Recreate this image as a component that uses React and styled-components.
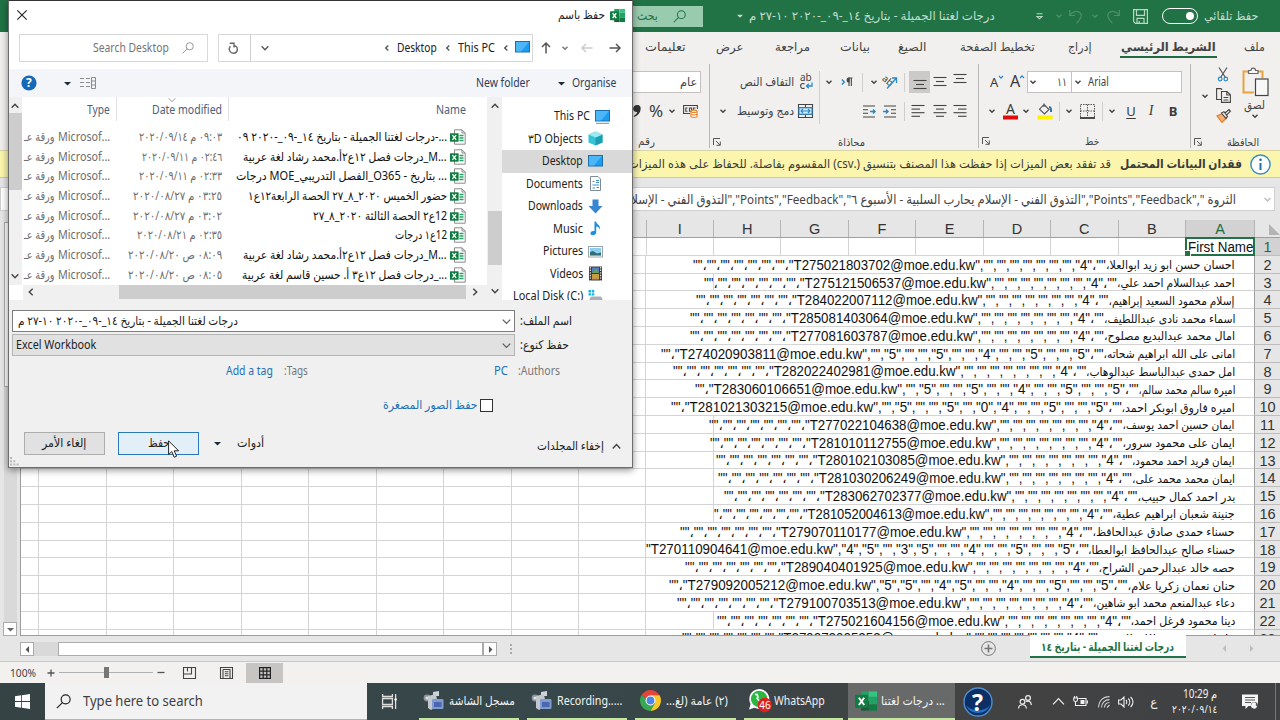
import React from 'react';
import styled, { createGlobalStyle, css } from 'styled-components';

const GlobalStyle = createGlobalStyle`
  * {
    box-sizing: border-box;
  }
  body {
    margin: 0;
    overflow: hidden;
    background: #e6e6e6;
  }
`;

const UI_FONT = '"Noto Sans", "Open Sans", "DejaVu Sans", sans-serif';
const CELL_FONT = '"Liberation Sans", "DejaVu Sans", sans-serif';

/* ---------- shared parts ---------- */

const TextBox = styled.span`
  display: block;
  flex: none;
  white-space: pre;
  margin-inline-start: ${p => p.$g || 0}px;
  font-size: ${p => p.$size || 12}px;
  font-weight: ${p => (p.$bold ? 700 : 400)};
  color: ${p => p.$color || 'inherit'};
  font-family: ${p => p.$font || 'inherit'};
  line-height: ${p => p.$lh || 16}px;
`;

const Isolate = styled.bdi`
  display: block;
`;

const TextRun = styled.span`
  display: inline-block;
  white-space: pre;
  transform-origin: ${p => (p.$origin === 'ltr' ? 'left' : 'right')} center;
  ${p =>
    p.$override &&
    css`
      direction: ltr;
      unicode-bidi: bidi-override;
    `}
`;

// Squeezes or stretches a run of text so it fills exactly w pixels.
const Fit = ({ w, g, size, color, bold, font, lh, dir = 'rtl', override, children }) => {
  const ref = React.useRef(null);
  const [scale, setScale] = React.useState(1);

  React.useLayoutEffect(() => {
    const natural = ref.current.offsetWidth;
    if (natural > 0) setScale(w / natural);
  }, [w, children]);

  return (
    <TextBox
      $g={g}
      $size={size}
      $color={color}
      $bold={bold}
      $font={font}
      $lh={lh}
      style={{ width: w }}
    >
      <Isolate dir={dir}>
        <TextRun ref={ref} $origin={dir} $override={override} style={{ transform: `scaleX(${scale})` }}>
          {children}
        </TextRun>
      </Isolate>
    </TextBox>
  );
};

const Slot = styled.div`
  flex: none;
  display: flex;
  align-items: center;
  justify-content: center;
  width: ${p => p.$w}px;
  height: ${p => (p.$h ? `${p.$h}px` : 'auto')};
  margin-inline-start: ${p => p.$g || 0}px;
  margin-top: ${p => p.$t || 0}px;
  background: ${p => p.$bg || 'transparent'};
`;

const Svg = styled.svg`
  display: block;
  flex: none;
  overflow: visible;
  fill: none;
  stroke: ${p => p.$c || '#444'};
  stroke-width: ${p => p.$sw || 1};
`;

const TURN = { down: 0, up: 180, left: 90, right: -90 };

const Chevron = ({ g, w = 6, color = '#444', sw = 1.4, turn = 'down', t }) => (
  <Slot $g={g} $w={w} $t={t}>
    <Svg width={w} height={w} viewBox="0 0 6 6" $c={color} $sw={sw * (6 / w)}>
      <path d="M0.5 1.7L3 4.3L5.5 1.7" transform={`rotate(${TURN[turn]} 3 3)`} />
    </Svg>
  </Slot>
);

const Caret = ({ g, w = 7, color = '#1c2b3a', turn = 'down' }) => (
  <Slot $g={g} $w={w}>
    <Svg width={w} height={w} viewBox="0 0 8 8" $c="none">
      <path d="M0 2.2H8L4 6.2Z" fill={color} transform={`rotate(${TURN[turn]} 4 4)`} />
    </Svg>
  </Slot>
);

const Magnifier = ({ w, color, sw = 1 }) => (
  <Svg width={w} height={w} viewBox="0 0 14 14" $c={color} $sw={sw}>
    <circle cx="9" cy="5" r="4.2" />
    <path d="M6 8L0.8 13.2" />
  </Svg>
);

const ExcelLogo = ({ w = 16 }) => (
  <Svg width={w} height={w} viewBox="0 0 16 16" $c="none">
    <path d="M4.5 1H10V8H4.5Z" fill="#21a366" />
    <path d="M10 1H16V5H10Z" fill="#33c481" />
    <path d="M10 5H16V10.5H10Z" fill="#21a366" />
    <path d="M4.5 8H10V15H4.5Z" fill="#185c37" />
    <path d="M10 10.5H16V15H10Z" fill="#107c41" />
    <rect x="0" y="3.5" width="9.5" height="9.5" rx="0.8" fill="#107c41" />
    <path d="M2.8 5.6L6.7 10.9M6.7 5.6L2.8 10.9" stroke="#fff" strokeWidth="1.4" />
  </Svg>
);

/* ---------- frame ---------- */

const Screen = styled.div`
  position: relative;
  display: flex;
  flex-direction: column;
  width: 1280px;
  height: 720px;
  overflow: hidden;
  font-family: ${UI_FONT};
  color: #444;
  background: #e6e6e6;
`;

const TitleBar = styled.div`
  display: flex;
  align-items: center;
  flex: none;
  height: 32px;
  background: #217346;
  color: #c4dccf;
`;

const Toggle = styled.div`
  flex: none;
  width: 36px;
  height: 16px;
  margin-inline-start: 6px;
  padding: 2.5px 3px;
  border: 1.4px solid #fff;
  border-radius: 8px;
  &::after {
    content: '';
    display: block;
    width: 8px;
    height: 8px;
    border-radius: 50%;
    background: #fff;
  }
`;

const SearchBox = styled.div`
  display: flex;
  align-items: center;
  flex: none;
  width: 90px;
  height: 21px;
  margin-inline-start: 34px;
  padding-inline-start: 17px;
  background: #99cbae;
  color: #217346;
`;

const Tabs = styled.div`
  display: flex;
  flex: none;
  height: 30px;
  padding-top: 7px;
  background: #f1f0ee;
`;

const ActiveTab = styled.div`
  flex: none;
  height: 19px;
  padding: 0 1px;
  margin-inline-start: 27px;
  border-bottom: 2px solid #1e6b41;
`;

const Ribbon = styled.div`
  display: flex;
  flex: none;
  height: 88px;
  background: #f1f0ee;
`;

const Group = styled.div`
  flex: none;
  width: ${p => p.$w}px;
  height: 84px;
  margin-top: 2px;
  padding-top: 7px;
  border-inline-end: 1px solid #b9b8b6;
`;

const GroupBody = styled.div`
  display: flex;
  height: 52px;
`;

const ToolColumn = styled.div`
  flex: none;
  width: ${p => p.$w}px;
`;

const ToolRow = styled.div`
  display: flex;
  align-items: center;
  height: 22px;
  margin-bottom: 7px;
`;

const GroupLabel = styled.div`
  display: flex;
  align-items: center;
  justify-content: space-between;
  height: 14px;
  margin-top: 12px;
  padding: 0 3px;
`;

const Divider = styled.div`
  flex: none;
  width: 1px;
  height: ${p => p.$h || 19}px;
  margin-inline-start: ${p => p.$g || 0}px;
  background: ${p => p.$c || '#cfcecc'};
`;

const Field = styled.div`
  display: flex;
  align-items: center;
  flex: none;
  width: ${p => p.$w}px;
  height: 22px;
  margin-inline-start: ${p => p.$g || 0}px;
  border: 1px solid #c3c2c0;
  background: #fff;
`;

const MessageBar = styled.div`
  display: flex;
  align-items: center;
  flex: none;
  height: 28px;
  padding-inline-start: 9px;
  border-top: 1px solid #d8d4a4;
  border-bottom: 1px solid #d0cc9a;
  background: #fbf5ae;
  color: #3c3c3c;
`;

const FormulaBar = styled.div`
  flex: none;
  height: 42px;
  padding: 9px 5px 9px 0;
  background: #e6e6e6;
`;

const FormulaField = styled.div`
  display: flex;
  align-items: center;
  height: 24px;
  border: 1px solid #cfcfcf;
  background: #fff;
`;

const LauncherIcon = () => (
  <Svg width="8" height="8" viewBox="0 0 8 8" $c="#555">
    <path d="M0.5 7V0.5H7M3 3L7 7M7.3 3.5V7.3H3.5" />
  </Svg>
);

const AlignIcon = ({ lines, dy = 0 }) => (
  <Svg width="14" height="14" viewBox="0 0 14 14" $c="#444" $sw={1.1}>
    {lines.map(([x1, x2], i) => (
      <path key={i} d={`M${x1} ${1.5 + dy + i * (lines.length > 3 ? 3.6 : 4)}H${x2}`} />
    ))}
  </Svg>
);

const IndentIcon = ({ flip }) => (
  <Svg width="15" height="13" viewBox="0 0 15 13" $c="#444" $sw={1.1}>
    {flip ? (
      <>
        <path d="M1 1H13M1 4.7H6M1 8.3H6M1 12H13" />
        <path d="M8 6.5H13M11 4.5L13 6.5L11 8.5" stroke="#2b88c8" strokeWidth="1.5" />
      </>
    ) : (
      <>
        <path d="M2 1H14M9 4.7H14M9 8.3H14M2 12H14" />
        <path d="M1 6.5H6M4 4.5L6 6.5L4 8.5" stroke="#2b88c8" strokeWidth="1.5" />
      </>
    )}
  </Svg>
);

const Letter = styled.span`
  font-family: "Noto Sans", sans-serif;
  font-size: ${p => p.$size || 13}px;
  line-height: 16px;
  font-weight: ${p => (p.$bold ? 700 : 400)};
  font-style: ${p => (p.$italic ? 'italic' : 'normal')};
  ${p => p.$italic && 'font-family: "Liberation Serif", serif;'}
  text-decoration: ${p => (p.$under ? 'underline' : 'none')};
  text-underline-offset: 2px;
  color: #3b3b3b;
`;

const DOC_TITLE = 'درجات لغتنا الجميلة - بتاريخ ١٤_-٠٩_-٢٠٢٠ ١٠-٢٧ م';

const ExcelTitle = () => (
  <TitleBar>
    <Fit g={22} w={54}>حفظ تلقائي</Fit>
    <Toggle />
    <Slot $g={14} $w={15}>
      <Svg width="15" height="15" viewBox="0 0 15 15" $c="#b8d8c6" $sw={1.2}>
        <path d="M0.6 0.6H14.4V14.4H2.4L0.6 12.6ZM3.5 0.6V6.4H11.5V0.6M4 14.4V9.4H11V14.4M6.2 12V14.4" />
      </Svg>
    </Slot>
    <Slot $g={13} $w={14}>
      <Svg width="14" height="15" viewBox="0 0 14 15" $c="#4d9069" $sw={1.2}>
        <path d="M13.3 1V6.5H8M13 6C10.5 2 5 1.4 2.6 4.2C0.2 7.2 2 10 6.5 14.2" />
      </Svg>
    </Slot>
    <Chevron g={8} w={6} color="#4d9069" />
    <Slot $g={9} $w={14}>
      <Svg width="14" height="15" viewBox="0 0 14 15" $c="#4d9069" $sw={1.2}>
        <path d="M0.7 1V6.5H6M1 6C3.5 2 9 1.4 11.4 4.2C13.8 7.2 12 10 7.5 14.2" />
      </Svg>
    </Slot>
    <Chevron g={7} w={6} color="#4d9069" />
    <Slot $g={13} $w={7}>
      <Svg width="7" height="7" viewBox="0 0 7 7" $c="#b8d8c6" $sw={1.1}>
        <path d="M0.5 0.8H6.5M1 3.5L3.5 5.8L6 3.5Z" />
      </Svg>
    </Slot>
    <Fit g={41} w={246}>{DOC_TITLE}</Fit>
    <Caret g={6} w={6} color="#c4dccf" />
    <SearchBox>
      <Magnifier w={13} color="#217346" sw={1.1} />
      <Fit g={15} w={21}>بحث</Fit>
    </SearchBox>
  </TitleBar>
);

const TABS_BEFORE = [{ label: 'ملف', g: 15, w: 21 }];
const TABS_AFTER = [
  { label: 'إدراج', g: 28, w: 24 },
  { label: 'تخطيط الصفحة', g: 33, w: 75 },
  { label: 'الصيغ', g: 34, w: 28 },
  { label: 'بيانات', g: 28, w: 30 },
  { label: 'مراجعة', g: 30, w: 35 },
  { label: 'عرض', g: 32, w: 27 },
  { label: 'تعليمات', g: 30, w: 41 },
];

const ExcelTabs = () => (
  <Tabs>
    {TABS_BEFORE.map(tab => (
      <Fit key={tab.label} g={tab.g} w={tab.w}>{tab.label}</Fit>
    ))}
    <ActiveTab>
      <Fit w={95} bold>الشريط الرئيسي</Fit>
    </ActiveTab>
    {TABS_AFTER.map(tab => (
      <Fit key={tab.label} g={tab.g} w={tab.w}>{tab.label}</Fit>
    ))}
  </Tabs>
);

const PasteButton = styled.div`
  display: flex;
  flex-direction: column;
  align-items: center;
  flex: none;
  width: 28px;
  margin-inline-start: 11px;
  margin-top: -4px;
`;

const SmallTools = styled.div`
  display: flex;
  flex-direction: column;
  flex: none;
  width: 34px;
  margin-inline-start: 10px;
  margin-top: -4px;
  gap: 6px;
`;

const SmallTool = styled.div`
  display: flex;
  align-items: center;
  height: 16px;
`;

const ClipboardGroup = () => (
  <Group $w={90}>
    <GroupBody>
      <PasteButton>
        <Svg width="27" height="30" viewBox="0 0 27 30" $c="#666" $sw={1.2}>
          <path d="M12 25.5H1.5V4.5H6M16 4.5H20.5V11" stroke="#e8a33d" strokeWidth="2" />
          <path d="M6.5 6.5V3.5H9C9 0.3 13.5 0.3 13.5 3.5H16V6.5Z" fill="#f8f8f8" />
          <rect x="13.5" y="12" width="12.5" height="16.5" fill="#f8f8f8" stroke="#444" />
        </Svg>
        <Fit w={21}>لصق</Fit>
        <Chevron w={6} />
      </PasteButton>
      <SmallTools>
        <SmallTool>
          <Slot $g={1} $w={14}>
            <Svg width="10" height="15" viewBox="0 0 10 15" $c="#555" $sw={1.2}>
              <path d="M1 0.5L7.4 10.5M9 0.5L2.6 10.5" />
              <circle cx="2.2" cy="12" r="1.8" stroke="#2b88c8" />
              <circle cx="7.8" cy="12" r="1.8" stroke="#2b88c8" />
            </Svg>
          </Slot>
        </SmallTool>
        <SmallTool>
          <Slot $w={15}>
            <Svg width="15" height="15" viewBox="0 0 15 15" $c="#444" $sw={1.1}>
              <path d="M5 11.5H0.6V0.6H5L6 1.8M5.5 3.5H11L14.4 6.8V14.4H5.5ZM10.8 3.5V7H14.4M7.5 9.5H12.3M7.5 12H12.3" />
            </Svg>
          </Slot>
          <Chevron g={8} w={6} />
        </SmallTool>
        <SmallTool>
          <Slot $w={15}>
            <Svg width="15" height="14" viewBox="0 0 15 14" $c="#444" $sw={1.1}>
              <path d="M1 7L6.5 4.5L10 9.5L6 13.5Z" fill="#f3b076" stroke="#e07a22" />
              <path d="M5.5 4L8 2.6L11.5 7.4L10 9.5ZM9 4L13 0.6L14.4 2.2L10.7 5.8" fill="#eee" />
            </Svg>
          </Slot>
        </SmallTool>
      </SmallTools>
    </GroupBody>
    <GroupLabel>
      <Fit g={18} w={32} size={11}>الحافظة</Fit>
      <LauncherIcon />
    </GroupLabel>
  </Group>
);

const SizeLetter = ({ size, up }) => (
  <Svg width="15" height="16" viewBox="0 0 15 16" $c="#2b88c8" $sw={1.2}>
    <text x="0" y="13" fontFamily="Noto Sans" fontSize={size} fill="#3b3b3b" stroke="none" direction="ltr">
      A
    </text>
    <path d={up ? 'M10 4L12 1.8L14 4' : 'M9 2L11 4.2L13 2'} />
  </Svg>
);

const FontGroup = () => (
  <Group $w={212}>
    <ToolRow>
      <Field $g={8} $w={111}>
        <Fit g={72} w={21} dir="ltr">Arial</Fit>
        <Chevron g={7} w={6} />
      </Field>
      <Field $g={-1} $w={45}>
        <Fit g={4} w={10}>١١</Fit>
        <Chevron g={21} w={6} />
      </Field>
      <Slot $g={3} $w={14}>
        <SizeLetter size={16} up />
      </Slot>
      <Slot $g={6} $w={13}>
        <SizeLetter size={13} />
      </Slot>
    </ToolRow>
    <ToolRow>
      <Slot $g={12} $w={10}><Letter $bold>B</Letter></Slot>
      <Slot $g={12} $w={10}><Letter $italic $size={14}>I</Letter></Slot>
      <Slot $g={10} $w={10}><Letter $under>U</Letter></Slot>
      <Chevron g={11} />
      <Divider $g={6} />
      <Slot $g={7} $w={15}>
        <Svg width="15" height="15" viewBox="0 0 15 15" $c="#555">
          <path d="M0.5 13V0.5H14.5V13M7.5 0.5V13M0.5 7H14.5" strokeDasharray="1.5 1" />
          <path d="M0 14H15" stroke="#222" strokeWidth="1.6" />
        </Svg>
      </Slot>
      <Chevron g={8} />
      <Divider $g={6} />
      <Slot $g={6} $w={16}>
        <Svg width="16" height="17" viewBox="0 0 16 17" $c="#555" $sw={1.1}>
          <path d="M7 1.5L12 6.5L7.5 11L2.5 6.2ZM7 4V0.5" />
          <path d="M12 4C14.4 4.4 14.2 7 14 9" stroke="#2b6fa8" strokeWidth="2" />
          <rect x="0.5" y="12.5" width="15" height="4" fill="#fff200" stroke="none" />
        </Svg>
      </Slot>
      <Chevron g={8} />
      <Slot $g={5} $w={15}>
        <Svg width="15" height="17" viewBox="0 0 15 17" $c="none">
          <text x="3" y="11" fontFamily="Noto Sans" fontSize="14" fill="#3b3b3b" direction="ltr">
            A
          </text>
          <rect x="0" y="12.5" width="15" height="4" fill="#e00b0b" />
        </Svg>
      </Slot>
      <Chevron g={8} />
    </ToolRow>
    <GroupLabel>
      <Fit g={88} w={14} size={11}>خط</Fit>
      <LauncherIcon />
    </GroupLabel>
  </Group>
);

const AlignmentGroup = () => (
  <Group $w={269}>
    <GroupBody>
      <ToolColumn $w={158}>
        <ToolRow>
          <Slot $g={11} $w={14} $t={-4}><AlignIcon lines={[[0.5, 13.5], [3, 11], [0.5, 13.5]]} /></Slot>
          <Slot $g={6} $w={14}><AlignIcon lines={[[0.5, 13.5], [3, 11], [0.5, 13.5]]} dy={1} /></Slot>
          <Slot $g={3} $w={21} $h={22} $bg="#cbcac8">
            <AlignIcon lines={[[0.5, 13.5], [3, 11], [0.5, 13.5]]} dy={4} />
          </Slot>
          <Divider $g={4} />
          <Slot $g={6} $w={16}>
            <Svg width="16" height="16" viewBox="0 0 16 16" $c="#2b88c8" $sw={1.3}>
              <text
                x="0"
                y="8"
                fontFamily="Noto Sans"
                fontSize="9.5"
                fill="#444"
                stroke="none"
                direction="ltr"
                transform="rotate(40 3 6)"
              >
                ab
              </text>
              <path d="M5 14.5L14.5 4M10 4H14.5V9" />
            </Svg>
          </Slot>
          <Chevron g={5} />
          <Divider $g={8} />
          <Slot $g={9} $w={12}>
            <Svg width="12" height="10" viewBox="0 0 12 10" $c="#444" $sw={1.1}>
              <path d="M8 9V1H11.5M10.3 1V9" />
              <path d="M8 1C5.5 1 5.5 5 8 5Z" fill="#444" />
              <path d="M0.8 2.5L3.4 5L0.8 7.5" stroke="#2b88c8" strokeWidth="1.4" />
            </Svg>
          </Slot>
          <Chevron g={9} />
        </ToolRow>
        <ToolRow>
          <Slot $g={11} $w={14}><AlignIcon lines={[[0.5, 13.5], [5, 13.5], [0.5, 13.5], [5, 13.5]]} /></Slot>
          <Slot $g={6} $w={14}><AlignIcon lines={[[0.5, 13.5], [3, 11], [0.5, 13.5], [3, 11]]} /></Slot>
          <Slot $g={8} $w={14}><AlignIcon lines={[[0.5, 13.5], [0.5, 9], [0.5, 13.5], [0.5, 9]]} /></Slot>
          <Divider $g={6} />
          <Slot $g={7} $w={15}><IndentIcon /></Slot>
          <Slot $g={5} $w={15}><IndentIcon flip /></Slot>
        </ToolRow>
      </ToolColumn>
      <Divider $h={53} />
      <ToolColumn $w={109}>
        <ToolRow>
          <Slot $g={6} $w={14}>
            <Svg width="14" height="16" viewBox="0 0 14 16" $c="#2b88c8" $sw={1.3}>
              <text x="1" y="7" fontFamily="Noto Sans" fontSize="10" fill="#444" stroke="none" direction="ltr">
                ab
              </text>
              <path d="M5.6 10C3.6 8.8 1.6 10 1.6 12C1.6 14 3.6 15.2 5.6 14" stroke="#444" strokeWidth="1.1" />
              <path d="M13 8.5V12H7.5M9.8 9.7L7.5 12L9.8 14.3" />
            </Svg>
          </Slot>
          <Fit g={5} w={54}>التفاف النص</Fit>
        </ToolRow>
        <ToolRow>
          <Slot $g={6} $w={15}>
            <Svg width="15" height="14" viewBox="0 0 15 14" $c="#444" $sw={1.1}>
              <path d="M0.5 0.5H14.5V13.5H0.5ZM0.5 3.5H14.5M0.5 10.5H14.5M7.5 0.5V3.5M7.5 10.5V13.5" />
              <rect x="1" y="3.8" width="13" height="6.4" fill="#d6eaf8" stroke="#2b88c8" />
              <path d="M3 7H12M5 5L3 7L5 9M10 5L12 7L10 9" stroke="#2b88c8" />
            </Svg>
          </Slot>
          <Fit g={4} w={57}>دمج وتوسيط</Fit>
          <Chevron g={11} />
        </ToolRow>
      </ToolColumn>
    </GroupBody>
    <GroupLabel>
      <Fit g={110} w={27} size={11}>محاذاة</Fit>
      <LauncherIcon />
    </GroupLabel>
  </Group>
);

const NumberGroup = () => (
  <Group $w={100}>
    <ToolRow>
      <Field $g={8} $w={90}>
        <Fit g={3} w={17}>عام</Fit>
      </Field>
    </ToolRow>
    <ToolRow>
      <Slot $g={11} $w={15}>
        <Svg width="15" height="14" viewBox="0 0 15 14" $c="#444" $sw={1.1}>
          <path d="M7 9.5H0.6V1.5H14.4V5M4.5 4H2.8V7.2H4.5M6.5 4H8.6V7.2H6.5ZM10.5 7V4H12.5" />
          <path d="M8 7.5V12.5C8 13.7 14 13.7 14 12.5V7.5" fill="#fff" stroke="#e8842c" />
          <ellipse cx="11" cy="7.3" rx="3" ry="1.2" fill="#fff" stroke="#e8842c" />
          <path d="M8 10C8 11.2 14 11.2 14 10" stroke="#e8842c" />
        </Svg>
      </Slot>
      <Chevron g={8} />
      <Slot $g={6} $w={14}><Letter $size={17}>%</Letter></Slot>
      <Slot $g={8} $w={9}>
        <Svg width="8" height="12" viewBox="0 0 8 12" $c="none">
          <path d="M4 0C7 0 8 2 7.6 4.5C7.2 8 5 10.6 1 12L0.6 11C3 9.5 4 8.5 4.2 7C1.5 7.2 0 5.6 0.2 3.5C0.4 1.5 2 0 4 0Z" fill="#333" />
        </Svg>
      </Slot>
    </ToolRow>
    <GroupLabel>
      <Fit g={51} w={17} size={11}>رقم</Fit>
    </GroupLabel>
  </Group>
);

const InfoBadge = () => (
  <Svg width="21" height="21" viewBox="0 0 21 21" $c="#3a8fc4" $sw={1.5}>
    <circle cx="10.5" cy="10.5" r="9.6" fill="#fff" />
    <path d="M10.5 9V16" stroke="#1f6fb0" strokeWidth="2" />
    <circle cx="10.5" cy="5.8" r="1.3" fill="#1f6fb0" stroke="none" />
  </Svg>
);

/* ---------- sheet ---------- */

const SheetArea = styled.div`
  display: flex;
  flex: none;
  height: 416px;
`;

const Sheet = styled.div`
  display: flex;
  flex-direction: column;
  width: 1260px;
  overflow: hidden;
  font-family: ${CELL_FONT};
  background: #fff;
  border-left: 1px solid #9c9c9c;
  border-bottom: 1px solid #9c9c9c;
`;

const SideScroll = styled.div`
  display: flex;
  flex-direction: column;
  width: 20px;
  padding: 2px 3px 0 4px;
  background: #e6e6e6;
`;

const SideThumb = styled.div`
  height: 165px;
  border: 1px solid #ababab;
  background: #fff;
`;

const SideTrack = styled.div`
  flex: 1;
  background: #d9d9d9;
`;

const ScrollButton = styled.div`
  display: flex;
  align-items: center;
  justify-content: center;
  flex: none;
  width: 14px;
  height: 14px;
  border: 1px solid #ababab;
  background: #fff;
`;

const HeaderRow = styled.div`
  display: flex;
  flex: none;
  height: 18px;
  background: #e6e6e6;
  border-bottom: 1px solid #9f9f9f;
`;

const ColumnHead = styled.div`
  flex: none;
  width: ${p => p.$w}px;
  text-align: center;
  font-size: 14.5px;
  line-height: 19px;
  color: ${p => (p.$on ? '#1e6b41' : '#333')};
  background: ${p => (p.$on ? '#d2d2d2' : 'transparent')};
  border-inline-end: 1px solid #b5b5b5;
`;

const Corner = styled.div`
  flex: none;
  width: 26px;
  padding: 4px 0 0 13px;
  border-inline-end: 1px solid #b5b5b5;
`;

const GridRow = styled.div`
  display: flex;
  flex: none;
  height: 17.8px;
`;

const RowHead = styled.div`
  flex: none;
  width: 26px;
  text-align: center;
  font-size: 14.5px;
  line-height: 18px;
  color: ${p => (p.$on ? '#1e6b41' : '#333')};
  background: ${p => (p.$on ? '#d2d2d2' : '#e6e6e6')};
  border-bottom: 1px solid #bdbdbd;
  border-inline-end: 1px solid #9f9f9f;
`;

const Cell = styled.div`
  flex: none;
  width: ${p => p.$w}px;
  border-bottom: 1px solid #d4d4d4;
  border-inline-end: 1px solid #d4d4d4;
`;

const SpillCell = styled(Cell)`
  display: flex;
  align-items: center;
  padding-top: 2px;
  padding-inline-start: 19px;
  color: #111;
`;

const ActiveCell = styled.div`
  position: relative;
  flex: none;
  width: 70px;
  height: 19px;
  margin-top: -1px;
  margin-inline-end: -1px;
  padding-left: 1px;
  direction: ltr;
  white-space: nowrap;
  color: #111;
  border: 2px solid #217346;
  &::after {
    content: '';
    position: absolute;
    left: -2px;
    bottom: -2px;
    width: 5px;
    height: 5px;
    background: #217346;
    border: 1px solid #fff;
    border-left: 0;
    border-bottom: 0;
  }
`;

const COLUMNS = ['A', 'B', 'C', 'D', 'E', 'F', 'G', 'H', 'I', '', '', '', '', '', '', '', '', '', ''];
const columnWidth = i => (i === 0 ? 69 : 67.45);

const BLANKS = Array(7).fill('');
const lateScores = ['', '5', '', '', '5', '', '', '4', '', '', '5', '', '', '5'];

// left: where the row's text ends, at: where the quoted part begins
const ROWS = [
  { name: 'احسان حسن ابو زيد ابوالعلا', id: 'T275021803702', left: 693, at: 1106 },
  { name: 'احمد عبدالسلام احمد علي', id: 'T275121506537', left: 704, at: 1117, span: 8 },
  { name: 'إسلام محمود السعيد إبراهيم', id: 'T284022007112', left: 696, at: 1108.5 },
  { name: 'اسماء محمد نادى عبداللطيف', id: 'T285081403064', left: 690, at: 1104 },
  { name: 'امال محمد عبدالبديع مصلوح', id: 'T277081603787', left: 690, at: 1104 },
  { name: 'امانى على الله ابراهيم شحاته', id: 'T274020903811', left: 661, at: 1103.5, marks: lateScores },
  { name: 'امل حمدى عبدالباسط عبدالوهاب', id: 'T282022402981', left: 672.5, at: 1086 },
  { name: 'اميرة سالم محمد سالم', id: 'T283060106651', left: 695, at: 1138.5, marks: lateScores },
  {
    name: 'اميره فاروق ابوبكر احمد',
    id: 'T281021303215',
    left: 670.5,
    at: 1121.5,
    marks: ['', '5', '', '', '5', '', '0', '4', '', '', '5', '', '', '5'],
  },
  { name: 'ايمان حسين احمد يوسف', id: 'T277022104638', left: 709, at: 1122.5, span: 8 },
  { name: 'ايمان على محمود سرور', id: 'T281010112755', left: 710, at: 1122.5, span: 8 },
  { name: 'ايمان فريد احمد محمود', id: 'T280102103085', left: 715.5, at: 1132, span: 8 },
  { name: 'ايمان محمد محمد على', id: 'T281030206249', left: 718, at: 1132, span: 8 },
  { name: 'بدر احمد كمال حبيب', id: 'T283062702377', left: 724, at: 1137.5, span: 8 },
  { name: 'جنينة شعبان ابراهيم عطية', id: 'T281052004613', left: 714, at: 1112.5, span: 8, cut: 1 },
  { name: 'حسناء حمدى صادق عبدالحافظ', id: 'T279070110177', left: 680, at: 1092.5 },
  {
    name: 'حسناء صالح عبدالحافظ ابوالعطا',
    id: 'T270110904641',
    left: 645.5,
    at: 1088,
    cut: 3,
    marks: ['4', '5', '', '3', '5', '', '', '4', '', '', '5', '', '', '5'],
  },
  { name: 'حصه خالد عبدالرحمن الشراح', id: 'T289040401925', left: 684.5, at: 1098.5 },
  {
    name: 'حنان نعمان زكريا علام',
    id: 'T279092005212',
    left: 669,
    at: 1127.5,
    marks: ['5', '5', '', '4', '5', '', '', '4', '', '', '5', '', '', '5'],
  },
  { name: 'دعاء عبدالمنعم محمد ابو شاهين', id: 'T279100703513', left: 677, at: 1093 },
  { name: 'دينا محمود فرغل احمد', id: 'T275021604156', left: 716.5, at: 1130.5, span: 8 },
  { name: 'رانيا محمد عبدالله السيد', id: 'T279072005253', left: 682, at: 1098 },
];

const quoted = ({ id, marks, cut = 0 }) => {
  const tail = marks || [...BLANKS, '4'];
  const head = '""،'.repeat(marks ? 1 : 7).slice(cut);
  return `${head}"${id}@moe.edu.kw",${tail.map(m => `"${m}"`).join(',')}،""`;
};

const NAME_EDGE = 1235;

const SheetRow = ({ row, number }) => {
  const span = row.span || 9;
  return (
    <GridRow>
      <RowHead>{number}</RowHead>
      <SpillCell $w={69 + 67.45 * (span - 1)}>
        <Fit w={NAME_EDGE - row.at} size={11.5}>{`${row.name}،`}</Fit>
        <Fit w={row.at - row.left} size={14} lh={17} dir="ltr" override>
          {quoted(row)}
        </Fit>
      </SpillCell>
      {COLUMNS.slice(span).map((c, i) => (
        <Cell key={i} $w={columnWidth(i + 1)} />
      ))}
    </GridRow>
  );
};

const TabStrip = styled.div`
  display: flex;
  flex: none;
  height: 26px;
  background: #e6e6e6;
  border-bottom: 1px solid #c8c8c8;
`;

const SheetTab = styled.div`
  display: flex;
  justify-content: center;
  flex: none;
  width: 156px;
  height: 23px;
  margin-top: -1px;
  margin-inline-start: 35px;
  padding-top: 4px;
  background: #fff;
  border-bottom: 2px solid #217346;
`;

const HorizontalScroll = styled.div`
  display: flex;
  align-items: center;
  flex: none;
  width: 477px;
  height: 14px;
  margin-top: 6px;
  margin-inline-start: 12px;
  background: #d9d9d9;
`;

const HorizontalThumb = styled.div`
  width: 425px;
  height: 14px;
  border: 1px solid #ababab;
  margin-inline-end: 24px;
  background: #fff;
`;

const StatusBar = styled.div`
  display: flex;
  align-items: center;
  flex: none;
  height: 21px;
  direction: ltr;
  background: #f2f1ef;
`;

const ZoomTrack = styled.div`
  display: flex;
  align-items: center;
  justify-content: center;
  width: 94px;
  height: 12px;
  margin-left: 4px;
  background: linear-gradient(#b0b0b0, #b0b0b0) center / 100% 1px no-repeat;
  &::after {
    content: '';
    width: 5px;
    height: 11px;
    background: #767676;
  }
`;

/* ---------- save dialog ---------- */

const Dialog = styled.div`
  position: absolute;
  left: 8px;
  top: 0;
  width: 625px;
  height: 468px;
  display: flex;
  flex-direction: column;
  color: #222;
  background: #f0f0f0;
  border: 1px solid #6d6d6d;
  border-top-color: #333;
  box-shadow: 0 2px 7px rgba(0, 0, 0, 0.45);
`;

const DialogTitle = styled.div`
  display: flex;
  align-items: center;
  flex: none;
  height: 29px;
  padding-bottom: 1px;
  padding-inline-start: 7px;
  background: #fff;
`;

const NavBar = styled.div`
  display: flex;
  align-items: center;
  flex: none;
  height: 39px;
  padding-bottom: 4px;
  background: #fff;
`;

const AddressBox = styled.div`
  display: flex;
  align-items: center;
  flex: none;
  width: 315px;
  height: 28px;
  margin-inline-start: 7px;
  border: 1px solid #d9d9d9;
`;

const FindBox = styled.div`
  display: flex;
  align-items: center;
  flex: none;
  width: 189px;
  height: 28px;
  margin-inline-start: 10px;
  padding-inline-start: 13px;
  border: 1px solid #d9d9d9;
`;

const CommandBar = styled.div`
  display: flex;
  align-items: center;
  flex: none;
  height: 28px;
  padding-inline-start: 16px;
  background: #f3f5f9;
  color: #2c3e5c;
`;

const Panes = styled.div`
  display: flex;
  flex: none;
  height: 203px;
  overflow: hidden;
  background: #fff;
`;

const Places = styled.div`
  flex: none;
  width: 130px;
  height: 203px;
  padding-top: 8px;
  overflow: hidden;
`;

const Place = styled.div`
  display: flex;
  align-items: center;
  height: 22.5px;
  padding-inline-start: ${p => (p.$root ? 22 : 29)}px;
  background: ${p => (p.$on ? '#d9d9d9' : 'transparent')};
  color: #222;
`;

const PaneScroll = styled.div`
  display: flex;
  flex-direction: column;
  align-items: center;
  flex: none;
  width: 15px;
  height: ${p => p.$h}px;
  padding: 5px 0;
  background: #f0f0f0;
`;

const PaneThumb = styled.div`
  width: 14px;
  height: ${p => p.$h}px;
  margin-top: ${p => p.$t}px;
  margin-bottom: auto;
  background: #cdcdcd;
`;

const FilePane = styled.div`
  flex: none;
  width: 465px;
  padding-inline-start: 4px;
`;

const FileHead = styled.div`
  display: flex;
  height: 30px;
  color: #4c607a;
`;

const HeadCell = styled.div`
  position: relative;
  display: flex;
  align-items: center;
  flex: none;
  width: ${p => p.$w}px;
  height: 24px;
  padding-top: 2px;
  padding-inline-start: ${p => p.$p}px;
  border-inline-end: 1px solid ${p => (p.$last ? 'transparent' : '#e2e2e2')};
`;

const SortMark = styled.div`
  position: absolute;
  top: -1px;
  left: 51px;
`;

const FileRow = styled.div`
  display: flex;
  align-items: center;
  height: 19.7px;
  color: #6d6d6d;
`;

const NameCell = styled.div`
  display: flex;
  align-items: center;
  flex: none;
  width: 255px;
  padding-inline-start: 17px;
  color: #111;
`;

const DateCell = styled.div`
  display: flex;
  flex: none;
  width: 112px;
  padding-inline-start: 6px;
`;

const TypeCell = styled.div`
  display: flex;
  flex: none;
  width: 94px;
  padding-inline-start: 6px;
`;

const PaneBottomScroll = styled.div`
  display: flex;
  align-items: center;
  height: 15px;
  width: 464px;
  margin-inline-start: -4px;
  background: #f0f0f0;
`;

const PaneBottomThumb = styled.div`
  width: 347px;
  height: 14px;
  margin-inline-start: 5px;
  background: #cdcdcd;
`;

const FormRow = styled.div`
  display: flex;
  align-items: center;
  flex: none;
  height: ${p => p.$h}px;
  margin-top: ${p => p.$t || 0}px;
`;

const Combo = styled.div`
  display: flex;
  align-items: center;
  flex: none;
  width: 503px;
  height: 22px;
  margin-inline-start: 5px;
  padding-inline-start: 3px;
  border: 1px solid ${p => (p.$grey ? '#b4b4b4' : '#7d7d7d')};
  background: ${p => (p.$grey ? '#e1e1e1' : '#fff')};
`;

const ComboText = styled.div`
  margin-inline-start: auto;
  padding-left: ${p => p.$p}px;
`;

const CheckBox = styled.div`
  flex: none;
  width: 13px;
  height: 13px;
  margin-inline-start: 139px;
  border: 1px solid #333;
  background: #fff;
`;

const DialogButton = styled.div`
  display: flex;
  align-items: center;
  justify-content: center;
  flex: none;
  width: 81px;
  height: 23px;
  margin-inline-start: ${p => p.$g}px;
  border: 1px solid ${p => (p.$hot ? '#2a7ab8' : '#adadad')};
  background: ${p => (p.$hot ? '#e2eff9' : '#e1e1e1')};
`;

const Grip = styled.div`
  position: absolute;
  left: 1px;
  bottom: 1px;
`;

const Pointer = styled.div`
  position: absolute;
  left: 168px;
  top: 440px;
`;

const ScreenIcon = ({ w = 15, stand }) => (
  <Svg width={w} height={w} viewBox="0 0 15 15" $c="#1b6fae">
    <rect x="0.5" y="1.5" width="14" height="10.5" fill="#1e9df0" />
    <path d="M1 2L14 2L6 11.5H1Z" fill="#4db6f7" stroke="none" />
    {stand && <path d="M1 14.3H14" stroke="#7a8a96" />}
  </Svg>
);

const PLACE_ICONS = {
  pc: <ScreenIcon stand />,
  cube: (
    <Svg width="15" height="15" viewBox="0 0 15 15" $c="none">
      <path d="M7.5 0.5L14.5 3.5V11.5L7.5 14.5L0.5 11.5V3.5Z" fill="#35c3d6" />
      <path d="M7.5 6.5L14.5 3.5V11.5L7.5 14.5Z" fill="#1c9fb5" />
      <path d="M7.5 0.5L14.5 3.5L7.5 6.5L0.5 3.5Z" fill="#9beaf2" />
    </Svg>
  ),
  desktop: <ScreenIcon />,
  doc: (
    <Svg width="15" height="15" viewBox="0 0 15 15" $c="#7f8c96">
      <path d="M2.5 0.5H10L12.5 3V14.5H2.5Z" fill="#fff" />
      <path d="M4.5 5.5H6.5M8 4.5H11M8 6.5H11M4.5 9H11M4.5 12H7M8.5 11.5H11" stroke="#3a8fc4" />
    </Svg>
  ),
  down: (
    <Svg width="15" height="15" viewBox="0 0 15 15" $c="none">
      <path d="M4.5 0.5H10.5V7H14.5L7.5 14.5L0.5 7H4.5Z" fill="#3786d2" />
    </Svg>
  ),
  music: (
    <Svg width="15" height="15" viewBox="0 0 15 15" $c="none">
      <path d="M6.5 0.5H8C8.5 3.5 13 4 12 9C11.5 6.5 10 6 8.2 5.6V11.5C8.2 14.5 2.5 15.5 2.5 12.3C2.5 10.3 5 9.6 6.5 10.2Z" fill="#1590e6" />
    </Svg>
  ),
  picture: (
    <Svg width="15" height="15" viewBox="0 0 15 15" $c="#9aa4ab">
      <rect x="0.5" y="2.5" width="14" height="10.5" fill="#fff" />
      <rect x="2" y="4" width="11" height="7.5" fill="#8fcdf5" stroke="none" />
      <path d="M2 11.5V8L5 7L9 9.5L13 8.5V11.5Z" fill="#2f6f73" stroke="none" />
    </Svg>
  ),
  film: (
    <Svg width="15" height="15" viewBox="0 0 15 15" $c="none">
      <rect x="1" y="0.5" width="13" height="14" fill="#3b3b3b" />
      <path d="M2.4 1V14.5M12.6 1V14.5" stroke="#ddd" strokeWidth="1.2" strokeDasharray="1.4 1.2" />
      <rect x="4" y="1.5" width="7" height="5.5" fill="#4f7fc0" />
      <rect x="4" y="8" width="7" height="5.5" fill="#c79a45" />
      <path d="M4 7L8 3L11 7Z" fill="#6b9d54" />
    </Svg>
  ),
  disk: (
    <Svg width="15" height="15" viewBox="0 0 15 15" $c="none">
      <path d="M0.5 1H3V3.5H0.5ZM3.8 1H6.3V3.5H3.8ZM0.5 4.3H3V6.5H0.5ZM3.8 4.3H6.3V6.5H3.8Z" fill="#16b3ea" />
      <path d="M3 7.5H13L14.5 10V13.5H1.5V10Z" fill="#a9b0b5" />
    </Svg>
  ),
};

const PLACES = [
  { label: 'This PC', icon: 'pc', w: 36, root: true },
  { label: '٣D Objects', icon: 'cube', w: 55 },
  { label: 'Desktop', icon: 'desktop', w: 41, on: true },
  { label: 'Documents', icon: 'doc', w: 57 },
  { label: 'Downloads', icon: 'down', w: 55 },
  { label: 'Music', icon: 'music', w: 30 },
  { label: 'Pictures', icon: 'picture', w: 40 },
  { label: 'Videos', icon: 'film', w: 33 },
  { label: 'Local Disk (C:)', icon: 'disk', w: 70 },
];

const FILES = [
  { name: '...-درجات لغتنا الجميلة - بتاريخ ١٤_-٠٩_-٢٠٢٠ ٠٩', w: 210, date: '٠٩:٠٣ م ٢٠٢٠/٠٩/١٤', dw: 83 },
  { name: '...M_درجات فصل ١٢ع٢أ.محمد رشاد لغة عربية', w: 204, date: '٠٢:٤٦ م ٢٠٢٠/٠٩/١١', dw: 80 },
  { name: '... بتاريخ - O365_الفصل التدريبي_MOE درجات', w: 211, date: '٠٢:٣٣ م ٢٠٢٠/٠٩/١١', dw: 83 },
  { name: 'حضور الخميس ٢٠٢٠_٨_٢٧ الحصة الرابعة١٢ع١', w: 199, date: '٠٣:٢٥ م ٢٠٢٠/٠٨/٢٧', dw: 89 },
  { name: '12ع٢ الحصة الثالثة ٢٠٢٠_٨_٢٧', w: 134, date: '٠٣:٠٢ م ٢٠٢٠/٠٨/٢٧', dw: 89 },
  { name: '12ع١ درجات', w: 52, date: '٠٢:٣٥ م ٢٠٢٠/٠٨/٢١', dw: 85 },
  { name: '...M_درجات فصل ١٢ع٢أ.محمد رشاد لغة عربية', w: 204, date: '٠٨:٠٩ ص ٢٠٢٠/٠٨/٢٠', dw: 94 },
  { name: '..._درجات فصل ١٢ع٣ أ. حسين قاسم لغة عربية', w: 205, date: '٠٨:٠٥ ص ٢٠٢٠/٠٨/٢٠', dw: 94 },
];

const WorkbookIcon = () => (
  <Svg width="16" height="16" viewBox="0 0 16 16" $c="#8a8a8a">
    <path d="M4.5 0.8H12L15.2 4V15.2H4.5Z" fill="#fff" />
    <path d="M12 0.8V4H15.2" />
    <path d="M9.5 6.5H13.5M9.5 9H13.5M9.5 11.5H13.5" stroke="#21a366" strokeWidth="1.4" />
    <rect x="0" y="4.3" width="8.6" height="8.4" fill="#107c41" stroke="none" />
    <path d="M2.4 6.2L6.2 10.9M6.2 6.2L2.4 10.9" stroke="#fff" strokeWidth="1.3" />
  </Svg>
);

const NavArrow = ({ g, color, turn = 0 }) => (
  <Slot $g={g} $w={12}>
    <Svg width="12" height="12" viewBox="0 0 12 12" $c={color} $sw={1.5}>
      <path d="M0.5 6H11M7 2L11 6L7 10" transform={`rotate(${turn} 6 6)`} />
    </Svg>
  </Slot>
);

const SaveDialog = () => (
  <Dialog>
    <DialogTitle>
      <ExcelLogo w={15} />
      <Fit g={5} w={47}>حفظ باسم</Fit>
      <Slot $g={531} $w={10}>
        <Svg width="10" height="10" viewBox="0 0 10 10" $c="#222" $sw={1.1}>
          <path d="M0.3 0.3L9.7 9.7M9.7 0.3L0.3 9.7" />
        </Svg>
      </Slot>
    </DialogTitle>
    <NavBar>
      <NavArrow g={11} color="#555" />
      <NavArrow g={16} color="#ccc" turn={180} />
      <Chevron g={13} w={6} color="#777" />
      <NavArrow g={10} color="#555" turn={-90} />
      <AddressBox>
        <Slot $g={2} $w={15}><ScreenIcon /></Slot>
        <Chevron g={6} w={6} color="#555" turn="left" />
        <Fit g={8} w={37} dir="ltr">This PC</Fit>
        <Chevron g={7} w={6} color="#555" turn="left" />
        <Fit g={8} w={40} dir="ltr">Desktop</Fit>
        <Chevron g={7} w={6} color="#555" turn="left" />
        <Chevron g={115} w={8} color="#555" />
        <Divider $g={10} $h={27} />
        <Slot $g={11} $w={11}>
          <Svg width="11" height="12" viewBox="0 0 11 12" $c="#666" $sw={1.4}>
            <path d="M2.2 4.2C0 7.6 2.2 11.2 5.5 11.2C10.4 11 10.6 4.4 6 3.6M1.8 1.2H6V5.4" />
          </Svg>
        </Slot>
      </AddressBox>
      <FindBox>
        <Magnifier w={12} color="#888" />
        <Fit g={13} w={76} dir="ltr" color="#757575">Search Desktop</Fit>
      </FindBox>
    </NavBar>
    <CommandBar>
      <Fit w={44} dir="ltr">Organise</Fit>
      <Caret g={7} />
      <Fit g={28} w={54} dir="ltr">New folder</Fit>
      <Slot $g={380} $w={16}>
        <Svg width="16" height="12" viewBox="0 0 16 12" $c="#8c8c8c">
          <path d="M0 1.5H4M0 5.5H4M0 9.5H4M6 1.5H10M6 5.5H10M6 9.5H10M11.5 0.5H15.5V11.5H11.5ZM11.5 4H15.5M11.5 8H15.5" />
        </Svg>
      </Slot>
      <Caret g={9} />
      <Slot $g={27} $w={16}>
        <Svg width="16" height="16" viewBox="0 0 16 16" $c="none">
          <circle cx="8" cy="8" r="7.6" fill="#1668b8" />
          <text x="5" y="12.3" fontFamily="Noto Sans" fontWeight="700" fontSize="12" fill="#fff" direction="ltr">
            ?
          </text>
        </Svg>
      </Slot>
    </CommandBar>
    <Panes>
      <Places>
        {PLACES.map(place => (
          <Place key={place.label} $on={place.on} $root={place.root}>
            {PLACE_ICONS[place.icon]}
            <Fit g={5} w={place.w} dir="ltr" override>{place.label}</Fit>
          </Place>
        ))}
      </Places>
      <PaneScroll $h={203}>
        <Chevron w={8} turn="up" />
        <PaneThumb $t={101} $h={54} />
        <Chevron w={8} />
      </PaneScroll>
      <FilePane>
        <FileHead>
          <HeadCell $w={255} $p={17}>
            <Fit w={30} dir="ltr">Name</Fit>
          </HeadCell>
          <HeadCell $w={112} $p={6}>
            <SortMark><Chevron w={8} color="#999" sw={1} /></SortMark>
            <Fit w={70} dir="ltr">Date modified</Fit>
          </HeadCell>
          <HeadCell $w={94} $p={6} $last>
            <Fit w={23} dir="ltr">Type</Fit>
          </HeadCell>
        </FileHead>
        {FILES.map((file, i) => (
          <FileRow key={i}>
            <NameCell>
              <Slot $w={16}><WorkbookIcon /></Slot>
              <Fit g={3} w={file.w}>{file.name}</Fit>
            </NameCell>
            <DateCell>
              <Fit w={file.dw}>{file.date}</Fit>
            </DateCell>
            <TypeCell>
              <Fit w={52} dir="ltr">Microsof...</Fit>
              <Fit g={3} w={31}>ورقة عـ</Fit>
            </TypeCell>
          </FileRow>
        ))}
        <PaneBottomScroll>
          <Chevron g={8} w={8} turn="right" />
          <PaneBottomThumb />
          <Chevron g={84} w={8} turn="left" />
        </PaneBottomScroll>
      </FilePane>
      <PaneScroll $h={188}>
        <Chevron w={8} turn="up" />
        <PaneThumb $t={3} $h={77} />
        <Chevron w={8} />
      </PaneScroll>
    </Panes>
    <FormRow $h={22} $t={10}>
      <Fit g={60} w={52}>اسم الملف:</Fit>
      <Combo>
        <Chevron w={9} color="#555" sw={1.1} />
        <ComboText $p={5}>
          <Fit w={220}>{DOC_TITLE}</Fit>
        </ComboText>
      </Combo>
    </FormRow>
    <FormRow $h={22} $t={2}>
      <Fit g={63} w={49}>حفظ كنوع:</Fit>
      <Combo $grey>
        <Chevron w={9} color="#555" sw={1.1} />
        <ComboText $p={3}>
          <Fit w={80} dir="ltr">Excel Workbook</Fit>
        </ComboText>
      </Combo>
    </FormRow>
    <FormRow $h={16} $t={7}>
      <Fit g={72} w={42} dir="ltr" color="#777">:Authors</Fit>
      <Fit g={10} w={14} dir="ltr" color="#2470b8">PC</Fit>
      <Fit g={186} w={24} dir="ltr" color="#777">:Tags</Fit>
      <Fit g={11} w={47} dir="ltr" color="#2470b8">Add a tag</Fit>
    </FormRow>
    <FormRow $h={16} $t={18}>
      <CheckBox />
      <Fit g={2} w={95} color="#2470b8">حفظ الصور المصغرة</Fit>
    </FormRow>
    <FormRow $h={24} $t={18}>
      <Slot $g={12} $w={8} $t={6}><Chevron w={9} turn="up" /></Slot>
      <Slot $g={8} $w={67} $t={6}><Fit w={67}>إخفاء المجلدات</Fit></Slot>
      <Fit g={273} w={27}>أدوات</Fit>
      <Caret g={16} />
      <DialogButton $g={15} $hot>
        <Fit w={22}>حفظ</Fit>
      </DialogButton>
      <DialogButton $g={13}>
        <Fit w={44}>إلغاء الأمر</Fit>
      </DialogButton>
    </FormRow>
    <Grip>
      <Svg width="9" height="9" viewBox="0 0 9 9" $c="none">
        <path d="M0 0H2V2H0ZM0 3.3H2V5.3H0ZM3.3 3.3H5.3V5.3H3.3ZM0 6.6H2V8.6H0ZM3.3 6.6H5.3V8.6H3.3ZM6.6 6.6H8.6V8.6H6.6Z" fill="#b8b8b8" />
      </Svg>
    </Grip>
  </Dialog>
);

/* ---------- taskbar ---------- */

const Taskbar = styled.div`
  display: flex;
  flex: none;
  height: 37px;
  direction: ltr;
  color: #f2f2f2;
  background: linear-gradient(90deg, #364345 0%, #37474a 45%, #3c4446 60%, #424242 75%, #3f4142 100%);
`;

const StartButton = styled.div`
  display: flex;
  align-items: center;
  justify-content: center;
  width: 45px;
`;

const TaskSearch = styled.div`
  display: flex;
  align-items: center;
  width: 322px;
  padding-left: 11px;
  color: #3f3f3f;
  background: #f2f2f2;
  border-bottom: 1px solid #b5b5b5;
`;

const TaskButton = styled.div`
  display: flex;
  align-items: center;
  flex: none;
  width: ${p => p.$w}px;
  margin-left: ${p => p.$g}px;
  padding-left: ${p => p.$p}px;
  border-bottom: 2px solid #c4e6a0;
  background: ${p => (p.$on ? '#686a6a' : 'transparent')};
`;

const Clock = styled.div`
  display: flex;
  flex-direction: column;
  align-items: flex-end;
  width: 46px;
  margin-left: 12px;
  padding-top: 3px;
`;

const CameraIcon = () => (
  <Svg width="21" height="21" viewBox="0 0 21 21" $c="none">
    <path d="M10 2L16 1V6H10Z" fill="#cfd4da" />
    <circle cx="4" cy="8" r="3.4" fill="#8b939b" />
    <circle cx="4" cy="8" r="1.6" fill="#dfe3e7" />
    <path d="M5 6L13 4L15 16L8 20L5 18Z" fill="#c3c8ce" />
    <rect x="9" y="9" width="11.5" height="10" rx="1" fill="#7f9ccc" />
    <rect x="11" y="12" width="7.5" height="5" fill="#4d66b0" />
  </Svg>
);

const ChromeIcon = () => (
  <Svg width="21" height="21" viewBox="0 0 20 20" $c="none">
    <path d="M10 10L1.34 5A10 10 0 0 1 18.66 5H10Z" fill="#e2453a" />
    <path d="M10 10L1.34 5A10 10 0 0 0 10 20L14.3 12.5Z" fill="#37a852" />
    <path d="M10 5H18.66A10 10 0 0 1 10 20L14.3 12.5Z" fill="#f9c727" />
    <circle cx="10" cy="10" r="4.7" fill="#fff" />
    <circle cx="10" cy="10" r="3.7" fill="#4a86e8" />
  </Svg>
);

const WhatsAppIcon = () => (
  <Svg width="23" height="23" viewBox="0 0 23 23" $c="none">
    <path d="M10 0A10 10 0 1 1 5.5 18.8L0 20.5L1.6 15A10 10 0 0 1 10 0Z" fill="#fff" />
    <circle cx="10.2" cy="10" r="8.3" fill="#2cb742" />
    <path d="M6 5.5L8 5.3L9 8L8 9.2C9 11 10 12 12 12.8L13.3 11.5" stroke="#fff" strokeWidth="1.6" />
    <circle cx="15.8" cy="16" r="7.2" fill="#e0201b" />
    <text x="10.2" y="20" fontFamily="Noto Sans" fontSize="10" fill="#fff">46</text>
  </Svg>
);

const TASKS = [
  { icon: <CameraIcon />, label: 'مسجل الشاشة', dir: 'rtl', g: 22, w: 100, p: 4, tg: 5, tw: 66 },
  { icon: <CameraIcon />, label: 'Recording.....', dir: 'ltr', g: 8, w: 100, p: 4, tg: 5, tw: 65 },
  { icon: <ChromeIcon />, label: '(٢) عامة (لغ...', dir: 'rtl', g: 8, w: 101, p: 5, tg: 5, tw: 62 },
  { icon: <WhatsAppIcon />, label: 'WhatsApp', dir: 'ltr', g: 8, w: 99, p: 5, tg: 2, tw: 51 },
  { icon: <ExcelLogo w={22} />, label: 'درجات لغتنا ...', dir: 'ltr', g: 5, w: 107, p: 7, tg: 4, tw: 64, on: true },
];

const WindowsTaskbar = () => (
  <Taskbar>
    <StartButton>
      <Svg width="15" height="15" viewBox="0 0 15 15" $c="none">
        <path d="M0 2.2L6.2 1.3V7H0ZM7 1.2L15 0V7H7ZM0 8H6.2V13.7L0 12.8ZM7 8H15V15L7 13.8Z" fill="#fff" />
      </Svg>
    </StartButton>
    <TaskSearch>
      <Magnifier w={15} color="#222" sw={1.1} />
      <Fit g={12} w={120} size={14} lh={20} dir="ltr">Type here to search</Fit>
    </TaskSearch>
    <Slot $g={15} $w={15}>
      <Svg width="15" height="15" viewBox="0 0 15 15" $c="#ddd" $sw={1.3}>
        <path d="M0.6 0V2.5H10.4V0M0.6 4.5H10.4V10.5H0.6ZM0.6 15V12.5H10.4V15M13.6 0V15" />
        <circle cx="13.6" cy="5.5" r="1.2" fill="#fff" stroke="none" />
      </Svg>
    </Slot>
    {TASKS.map((task, i) => (
      <TaskButton key={i} $g={task.g} $w={task.w} $p={task.p} $on={task.on}>
        {task.icon}
        <Fit g={task.tg} w={task.tw} dir={task.dir}>{task.label}</Fit>
      </TaskButton>
    ))}
    <Slot $g={8} $w={30}>
      <Svg width="30" height="30" viewBox="0 0 30 30" $c="#4f8fd0" $sw={1.4}>
        <circle cx="15" cy="15" r="14" fill="#0c2f66" />
        <path d="M3 18C8 25 22 25 27 18A13 13 0 0 1 3 18Z" fill="#2274c4" stroke="none" />
        <text x="9" y="23.5" fontFamily="Noto Sans" fontWeight="700" fontSize="23" fill="#fff" stroke="none">?</text>
      </Svg>
    </Slot>
    <Slot $g={25} $w={14}>
      <Svg width="14" height="14" viewBox="0 0 14 14" $c="#f0f0f0" $sw={1.2}>
        <circle cx="4.5" cy="6.7" r="2.4" />
        <circle cx="10" cy="3" r="2.4" />
        <path d="M0.6 13.5C0.8 8.5 8 8.5 8.4 13.5M8 6.5C10.5 5.2 13.2 6.8 13.4 10" />
      </Svg>
    </Slot>
    <Chevron g={20} w={13} color="#f0f0f0" turn="up" sw={1.2} />
    <Slot $g={8} $w={15}>
      <Svg width="15" height="11" viewBox="0 0 15 11" $c="#f0f0f0" $sw={1.1}>
        <path d="M5.5 2.5H13V9.5H2.5V6M14.4 4.5V7.5M0.7 2H4.5V4C4.5 6 0.7 6 0.7 4ZM1.5 0V2M3.7 0V2" />
        <rect x="7.5" y="4" width="4" height="4" fill="#f0f0f0" stroke="none" />
      </Svg>
    </Slot>
    <Slot $g={10} $w={12}>
      <Svg width="12" height="12" viewBox="0 0 12 12" $c="#d0d0d0" $sw={1.1}>
        <path d="M0.6 11.5C0.6 5 5 0.6 11.5 0.6M3.6 11.5C3.6 6.8 6.8 3.6 11.5 3.6M6.5 11.5C6.5 8.5 8.5 6.5 11.5 6.5M9 11.5L11.5 9" />
      </Svg>
    </Slot>
    <Slot $g={8} $w={16}>
      <Svg width="16" height="12" viewBox="0 0 16 12" $c="#f0f0f0" $sw={1.1}>
        <path d="M0.6 4V8H3L6 11V1L3 4ZM8 4C9 5 9 7 8 8M10.3 2.5C12.2 4.5 12.2 7.5 10.3 9.5M12.6 1C15.8 4 15.8 8 12.6 11" />
      </Svg>
    </Slot>
    <Slot $g={15} $w={10}><Fit w={7}>ع</Fit></Slot>
    <Clock>
      <Fit w={34} lh={15}>م 10:29</Fit>
      <Fit w={45} lh={15} size={11}>٢٠٢٠/٠٩/١٤</Fit>
    </Clock>
    <Slot $g={25} $w={16}>
      <Svg width="16" height="16" viewBox="0 0 16 16" $c="none">
        <path d="M0 0.5H16V12H6.5L3.5 15V12H0Z" fill="#f5f5f5" />
        <path d="M3 3.5H13M3 6H13M3 8.5H9" stroke="#555" />
        <circle cx="12.5" cy="11.5" r="3.6" fill="#555" />
        <path d="M14 9.2A3 3 0 1 0 15 12.6A2.6 2.6 0 0 1 14 9.2Z" fill="#f5f5f5" />
      </Svg>
    </Slot>
    <Divider $g={17} $h={37} $c="#777" />
  </Taskbar>
);

const FORMULA =
  'الثروة ","Points","Feedback","التذوق الفني - الإسلام يحارب السلبية - الأسبوع ٦","Points","Feedback","التذوق الفني - الإسلام';

const App = () => (
  <>
    <GlobalStyle />
    <Screen dir="rtl">
      <ExcelTitle />
      <ExcelTabs />
      <Ribbon>
        <ClipboardGroup />
        <FontGroup />
        <AlignmentGroup />
        <NumberGroup />
      </Ribbon>
      <MessageBar>
        <InfoBadge />
        <Fit g={8} w={122} bold>فقدان البيانات المحتمل</Fit>
        <Fit g={9} w={483}>
          قد تفقد بعض الميزات إذا حفظت هذا المصنف بتنسيق (.csv) المقسوم بفاصلة. للحفاظ على هذه الميزات
        </Fit>
      </MessageBar>
      <FormulaBar>
        <FormulaField>
          <Chevron g={3} w={7} color="#bbb" />
          <Fit g={28} w={612} size={13} lh={20}>{FORMULA}</Fit>
        </FormulaField>
      </FormulaBar>
      <SheetArea>
        <Sheet>
          <HeaderRow>
            <Corner>
              <Svg width="11" height="11" viewBox="0 0 11 11" $c="none">
                <path d="M0 0V11H11Z" fill="#b4b4b4" />
              </Svg>
            </Corner>
            {COLUMNS.map((c, i) => (
              <ColumnHead key={i} $w={columnWidth(i)} $on={i === 0}>{c}</ColumnHead>
            ))}
          </HeaderRow>
          <GridRow>
            <RowHead $on>1</RowHead>
            <ActiveCell>
              <Fit w={65} size={14} lh={16} dir="ltr">First Name</Fit>
            </ActiveCell>
            {COLUMNS.slice(1).map((c, i) => (
              <Cell key={i} $w={67.45} />
            ))}
          </GridRow>
          {ROWS.map((row, i) => (
            <SheetRow key={row.id} row={row} number={i + 2} />
          ))}
        </Sheet>
        <SideScroll>
          <SideThumb />
          <SideTrack />
          <ScrollButton><Caret w={7} color="#666" /></ScrollButton>
        </SideScroll>
      </SheetArea>
      <TabStrip>
        <Caret g={25} w={7} color="#bdbdbd" turn="right" />
        <Caret g={20} w={7} color="#bdbdbd" turn="left" />
        <SheetTab>
          <Fit w={133} size={11.5} bold color="#217346">درجات لغتنا الجميلة - بتاريخ ١٤</Fit>
        </SheetTab>
        <Slot $g={34} $w={15}>
          <Svg width="15" height="15" viewBox="0 0 15 15" $c="#767676">
            <circle cx="7.5" cy="7.5" r="6.9" />
            <path d="M7.5 3.5V11.5M3.5 7.5H11.5" strokeWidth="1.6" />
          </Svg>
        </Slot>
        <Slot $g={469} $w={3}>
          <Svg width="2" height="10" viewBox="0 0 2 10" $c="none">
            <path d="M0 0H2V2H0ZM0 4H2V6H0ZM0 8H2V10H0Z" fill="#aaa" />
          </Svg>
        </Slot>
        <HorizontalScroll>
          <ScrollButton><Caret w={7} color="#555" turn="right" /></ScrollButton>
          <HorizontalThumb />
          <ScrollButton><Caret w={7} color="#555" turn="left" /></ScrollButton>
        </HorizontalScroll>
      </TabStrip>
      <StatusBar>
        <Fit g={10} w={26} size={11} dir="ltr">100%</Fit>
        <Slot $g={10} $w={9}>
          <Svg width="8" height="8" viewBox="0 0 8 8" $c="#555" $sw={1.3}>
            <path d="M4 0.5V7.5M0.5 4H7.5" />
          </Svg>
        </Slot>
        <ZoomTrack />
        <Slot $g={4} $w={8}>
          <Svg width="8" height="8" viewBox="0 0 8 8" $c="#555" $sw={1.3}>
            <path d="M0.5 3.5H7.5" />
          </Svg>
        </Slot>
        <Slot $g={18} $w={13}>
          <Svg width="13" height="12" viewBox="0 0 13 12" $c="#444" $sw={1.1}>
            <path d="M0.5 0.5H12.5V11.5H0.5ZM0.5 7H8.5V0.5M4.5 0.5V4.5" />
          </Svg>
        </Slot>
        <Slot $g={24} $w={13}>
          <Svg width="13" height="12" viewBox="0 0 13 12" $c="#444" $sw={1.1}>
            <path d="M0.5 0.5H12.5V11.5H0.5ZM3 2.5H10V11.5M3 2.5V11.5M4.8 4.8H8.4M4.8 6.8H8.4M4.8 8.8H8.4" />
          </Svg>
        </Slot>
        <Slot $g={13} $w={37} $h={20} $bg="#c6c5c3">
          <Svg width="12" height="12" viewBox="0 0 12 12" $c="#222" $sw={1.2}>
            <path d="M0.6 0.6H11.4V11.4H0.6ZM0.6 4.2H11.4M0.6 7.8H11.4M4.2 0.6V11.4M7.8 0.6V11.4" />
          </Svg>
        </Slot>
      </StatusBar>
      <WindowsTaskbar />
      <SaveDialog />
      <Pointer>
        <Svg width="12" height="19" viewBox="0 0 12 19" $c="#222">
          <path d="M0.6 0.8V14.5L3.8 11.6L6.2 17.2L8.6 16.2L6.2 10.8H10.6Z" fill="#fff" />
        </Svg>
      </Pointer>
    </Screen>
  </>
);

export default App;
